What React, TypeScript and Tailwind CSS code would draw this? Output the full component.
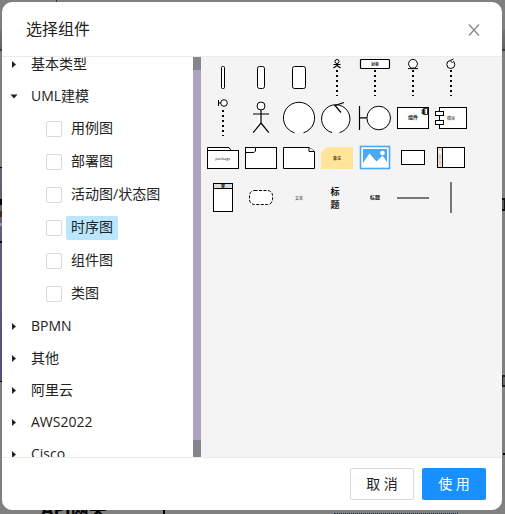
import React, { useState } from "react";

const FONT = "font-['Open_Sans','Noto_Sans_CJK_SC',sans-serif]";

type Group = { name: string; open?: boolean; children?: string[] };

const groups: Group[] = [
  { name: "基本类型" },
  {
    name: "UML建模",
    open: true,
    children: ["用例图", "部署图", "活动图/状态图", "时序图", "组件图", "类图"],
  },
  { name: "BPMN" },
  { name: "其他" },
  { name: "阿里云" },
  { name: "AWS2022" },
  { name: "Cisco" },
];

function Label({ x = 19, y, size = 5, bold, fill = "#111", children }: {
  x?: number; y: number; size?: number; bold?: boolean; fill?: string; children: string;
}) {
  return (
    <text x={x} y={y} fontSize={size} fontWeight={bold ? 700 : 400} textAnchor="middle" fill={fill} stroke="none">
      {children}
    </text>
  );
}

const lifeline = <path d="M19 12V38" strokeWidth="2" strokeDasharray="2 3" />;

const shapes: { name: string; art: React.ReactNode }[] = [
  { name: "激活条", art: <rect x="17.5" y="8.5" width="3" height="22" rx="1" /> },
  { name: "激活框", art: <rect x="15.5" y="8.5" width="7" height="22" rx="2" /> },
  { name: "圆角框", art: <rect x="12.5" y="8.5" width="13" height="22" rx="2" /> },
  {
    name: "角色生命线",
    art: (
      <>
        <circle cx="19" cy="3.5" r="2" />
        <path d="M15.5 6.5H22.5M19 5.5V7.5L15.5 10M19 7.5L22.5 10" strokeWidth="1.2" />
        {lifeline}
      </>
    ),
  },
  {
    name: "对象生命线",
    art: (
      <>
        <rect x="4.5" y="1.5" width="29" height="9" rx="1" strokeWidth="1.2" />
        <Label y={8} size={4} bold>对象</Label>
        {lifeline}
      </>
    ),
  },
  {
    name: "实体生命线",
    art: (
      <>
        <circle cx="19" cy="5.8" r="4.4" />
        <path d="M14 10.6H24" />
        {lifeline}
      </>
    ),
  },
  {
    name: "控制生命线",
    art: (
      <>
        <circle cx="18.8" cy="6.5" r="4" />
        <path d="M21.5 1L18.3 2.6L20.6 5" />
        {lifeline}
      </>
    ),
  },
  {
    name: "边界生命线",
    art: (
      <>
        <circle cx="20" cy="5" r="3.3" />
        <path d="M14.5 2V8M14.5 5H16.7" />
        {lifeline}
      </>
    ),
  },
  {
    name: "参与者",
    art: (
      <>
        <circle cx="19" cy="8" r="4" />
        <path d="M11 16H27M19 12V25L11.2 34.6M19 25L26.8 34.6" strokeWidth="1.2" />
      </>
    ),
  },
  { name: "实体", art: <path d="M14.5 34.8A15.6 15.6 0 1 1 23.5 34.8" /> },
  {
    name: "控制",
    art: (
      <>
        <path d="M14 34.6A14.2 14.2 0 1 1 21.5 34.6" />
        <path d="M26 4.5L17 7.5L23 14.5" fill="none" strokeWidth="1.2" />
      </>
    ),
  },
  {
    name: "边界",
    art: (
      <>
        <circle cx="22.7" cy="20" r="11.8" />
        <path d="M3.5 8V32M3.5 19.8H10.9" strokeWidth="1.2" />
      </>
    ),
  },
  {
    name: "组件",
    art: (
      <>
        <rect x="3.5" y="9.5" width="31" height="21" />
        <Label y={21} bold>组件</Label>
        <path d="M29.5 10.5H33.5V16.5H29.5ZM28 11.8H31V13.2H28ZM28 14.2H31V15.6H28Z" strokeWidth="0.8" />
      </>
    ),
  },
  {
    name: "模块",
    art: (
      <>
        <rect x="7.5" y="9.5" width="27" height="21" />
        <rect x="3.5" y="13.5" width="8" height="4" />
        <rect x="3.5" y="22.5" width="8" height="4" />
        <Label y={22} size={4}>模块</Label>
      </>
    ),
  },
  {
    name: "包",
    art: (
      <>
        <path d="M3.5 12.5V9.5H25L27 12.5" />
        <rect x="3.5" y="12.5" width="31" height="18" />
        <Label y={22} size={4}>package</Label>
      </>
    ),
  },
  {
    name: "组合片段",
    art: (
      <>
        <rect x="3.5" y="9.5" width="31" height="21" />
        <path d="M3.5 14.5H12L13.5 13V9.5" />
      </>
    ),
  },
  {
    name: "注释",
    art: (
      <>
        <path d="M3.5 9.5H29L34.5 13.5V30.5H3.5Z" />
        <path d="M29 9.5V13.5H34.5" />
      </>
    ),
  },
  {
    name: "备注",
    art: (
      <>
        <path d="M9 9H35V31H3V14.5Z" fill="#ffe599" stroke="none" />
        <Label y={22} size={4} bold fill="#5a3a20">备注</Label>
      </>
    ),
  },
  {
    name: "图片",
    art: (
      <>
        <rect x="4.5" y="8.5" width="29" height="22" stroke="#4ba9f1" strokeWidth="1.6" />
        <path d="M7 11H31V24L26.5 17.5L20.5 23.5L13.5 15.5L7 25Z" fill="#4ba9f1" stroke="none" />
        <circle cx="26.5" cy="15" r="2.3" stroke="none" />
      </>
    ),
  },
  { name: "矩形", art: <rect x="7.5" y="12.5" width="23" height="14" /> },
  {
    name: "横向泳道",
    art: (
      <>
        <rect x="5.5" y="9.5" width="27" height="20" />
        <rect x="5.5" y="9.5" width="5" height="20" fill="#e4ded6" />
        <circle cx="8" cy="14" r="1.3" stroke="none" />
        <path d="M8 17V21M8 23V26" stroke="#d2a56e" strokeWidth="0.8" />
      </>
    ),
  },
  {
    name: "容器",
    art: (
      <>
        <rect x="9.5" y="5.5" width="19" height="28" />
        <rect x="9.5" y="5.5" width="19" height="5" fill="#dcdcdc" />
        <Label y={10} size={4} bold>容</Label>
      </>
    ),
  },
  { name: "虚线框", art: <rect x="7.5" y="12.5" width="23" height="14" rx="5" strokeDasharray="3 1.5" /> },
  { name: "文本", art: <Label y={22} size={4}>文本</Label> },
  {
    name: "大标题",
    art: (
      <>
        <Label x={17} y={17} size={9} bold>标</Label>
        <Label x={17} y={30} size={9} bold>题</Label>
      </>
    ),
  },
  { name: "标题", art: <Label y={21} bold>标题</Label> },
  { name: "横线", art: <path d="M3 20H35" stroke="#777" strokeWidth="2" /> },
  { name: "竖线", art: <path d="M19 4V35" stroke="#777" strokeWidth="2" /> },
];

function Caret({ open }: { open?: boolean }) {
  return (
    <svg viewBox="0 0 24 24" className="h-6 w-6 shrink-0 fill-[#222]" aria-hidden="true">
      <path d={open ? "M8.5 10.5H15.5L12 14.5Z" : "M10 9V16L14 12.5Z"} />
    </svg>
  );
}

function Backdrop() {
  return (
    <div aria-hidden="true" className="absolute inset-0 overflow-hidden bg-[#808080]">
      <div className="absolute top-[29px] left-0 h-5 w-full bg-linear-to-b from-[#777] to-[#626262]" />
      <div className="absolute top-[49px] left-0 h-0.5 w-full bg-[#3c3c3c]" />
      <div className="absolute top-[167px] left-0 h-[215px] w-2 border-y border-black bg-linear-to-b from-[#62647c] to-[#50527a]" />
      <div className="absolute top-[199px] left-0 h-[6px] w-2 bg-black" />
      <div className="absolute top-[211px] left-0 h-[6px] w-2 bg-[#4a2c12]" />
      <div className="absolute top-[223px] left-0 h-[3px] w-2 bg-[#999]" />
      <div className="absolute top-[241px] left-0 h-0.5 w-2 bg-black" />
      <div className="absolute top-0 left-14 h-0.5 w-px bg-[#701818]" />
      <div className="absolute top-[495px] left-[41px] text-lg leading-7 font-bold text-black">API网关</div>
      <div className="absolute bottom-0 left-[163px] h-1 w-0.5 bg-black" />
      <div className="absolute bottom-0 left-[334px] w-[124px] border-t border-dotted border-[#20304a]" />
      <div className="absolute top-[198px] right-0 h-[13px] w-[3px] border-y-2 border-r border-[#111] bg-[#555]" />
      <div className="absolute top-[375px] right-0 h-3 w-[3px] border-y-2 border-l border-[#222] bg-[#666]" />
      <div className="absolute top-[453px] right-0 h-0.5 w-0.5 bg-black" />
    </div>
  );
}

export default function App() {
  const [selected, setSelected] = useState("时序图");
  return (
    <div className={`relative h-screen min-h-[400px] text-[14px] text-[#222] ${FONT}`}>
      <Backdrop />
      <div className="relative flex h-full flex-col pt-0.5 pr-[3px] pb-1 pl-0.5">
        <section role="dialog" aria-labelledby="title" className="flex min-h-0 flex-1 flex-col overflow-hidden rounded-[10px] bg-white">
          <header className="flex h-[55px] shrink-0 items-center justify-between border-b border-[#ebebeb] pr-[18px] pl-6">
            <h1 id="title" className="text-[16px] leading-6">选择组件</h1>
            <button aria-label="关闭" className="flex h-5 w-5 items-end justify-center pb-[3px]">
              <svg viewBox="0 0 12 12" className="h-3 w-3 fill-none stroke-[#888]">
                <path d="M1 0.5L11 11.5M11 0.5L1 11.5" strokeWidth="1.3" />
              </svg>
            </button>
          </header>
          <div className="flex min-h-0 flex-1">
            <nav className="w-[191px] shrink-0 overflow-hidden">
              <ul className="-mt-[9px]">
                {groups.map((g) => (
                  <li key={g.name}>
                    <button className="flex h-8 items-center gap-[5px]">
                      <Caret open={g.open} />
                      <span className="leading-6">{g.name}</span>
                    </button>
                    {g.children && (
                      <ul>
                        {g.children.map((c) => (
                          <li key={c} className="flex h-[33px] items-center gap-1 pl-11">
                            <input
                              type="checkbox"
                              id={c}
                              className="h-4 w-4 appearance-none rounded-xs border border-[#d9d9d9] bg-white"
                            />
                            <label
                              htmlFor={c}
                              onClick={() => setSelected(c)}
                              className={`rounded-xs px-[5px] pb-0.5 leading-[22px] ${selected === c ? "bg-[#bae7ff]" : ""}`}
                            >
                              {c}
                            </label>
                          </li>
                        ))}
                      </ul>
                    )}
                  </li>
                ))}
              </ul>
            </nav>
            <div className="flex w-2 shrink-0 flex-col bg-[#85858f] pt-[13px] pb-[17px]">
              <div className="flex-1 bg-[#aba3bf]" />
            </div>
            <div className="flex flex-1 flex-wrap content-start bg-[#f4f4f4] px-[3px] pt-px">
              {shapes.map((s) => (
                <button key={s.name} aria-label={s.name} className="h-10 w-[38px]">
                  <svg viewBox="0 0 38 40" className="block h-10 w-[38px] fill-white stroke-black">
                    {s.art}
                  </svg>
                </button>
              ))}
            </div>
          </div>
          <footer className="flex h-[53px] shrink-0 items-center justify-end gap-2 border-t border-[#ebebeb] pr-4">
            <button className="h-8 w-16 rounded-xs border border-[#d9d9d9] bg-white pb-0.5">取 消</button>
            <button className="h-8 w-16 rounded-xs bg-[#1890ff] pb-0.5 text-white">使 用</button>
          </footer>
        </section>
      </div>
    </div>
  );
}
